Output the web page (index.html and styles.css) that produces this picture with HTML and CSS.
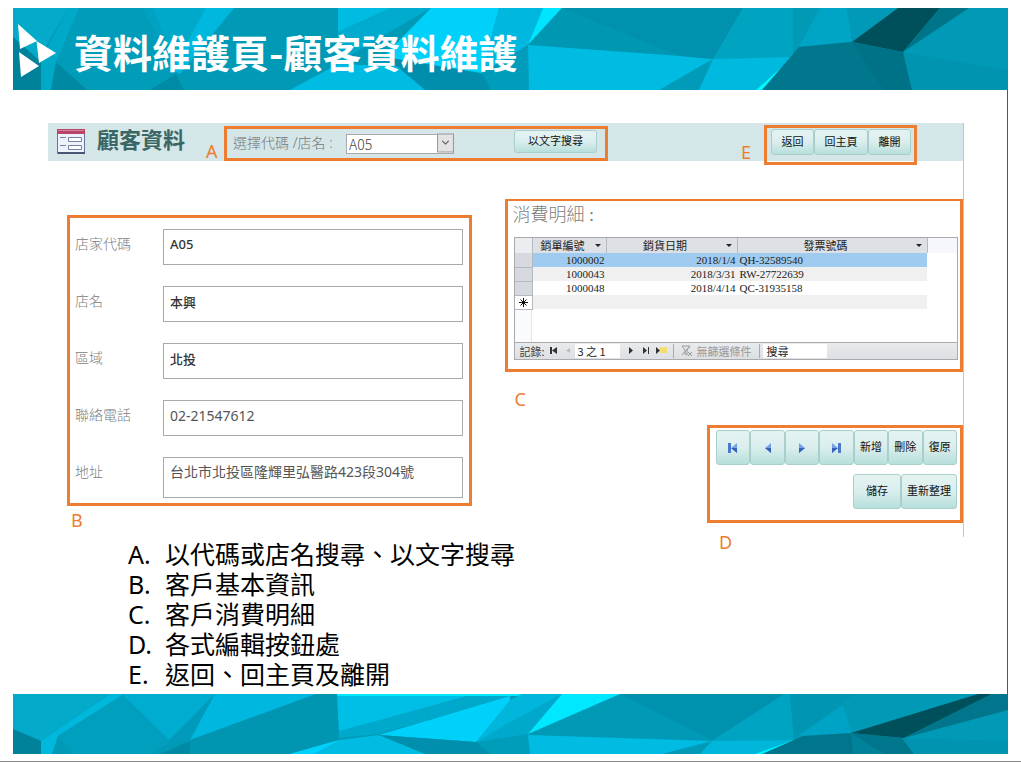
FILE: index.html
```html
<!DOCTYPE html>
<html lang="zh-Hant">
<head>
<meta charset="utf-8">
<meta name="viewport" content="width=device-width, initial-scale=1">
<title>資料維護頁-顧客資料維護</title>
<link rel="stylesheet" href="styles.css">
</head>
<body>
<header class="banner">
  <svg class="facets" viewBox="13 8 995 82" preserveAspectRatio="none" aria-hidden="true">
    <path fill="#009ab6" d="M13 8h995v82H13z"/>
    <path fill="#03aaca" d="M13 8h55L37 62 13 37z"/>
    <path fill="#00829a" d="M13 37l28 25v28H13z"/>
    <path fill="#01a9c9" d="M68 8h11L56 62 51 90H41V60z"/>
    <path fill="#00a3c1" d="M56 63L79 8h74l20 62-8 20H51z" opacity=".3"/>
    <path fill="#0089a2" d="M56 62l31 28H51z"/>
    <path fill="#00a8c9" d="M153 8h66l-43 62z"/>
    <path fill="#00a8c9" d="M153 8h-11l34 62z" opacity=".5"/>
    <path fill="#00b7de" d="M206 8h28l-54 66-8-4z"/>
    <path fill="#008ba4" d="M150 90l26-16 8 16z"/>
    <path fill="#00bbe2" d="M338 8h53l-53 24z"/>
    <path fill="#00abcf" d="M391 8h40L338 62V32z"/>
    <path fill="#00bbe2" d="M338 64l76 3 22 23H290z"/>
    <path fill="#00d1fa" d="M431 8h68l-17 65-99-16z"/>
    <path fill="#00b8df" d="M499 8h44l-15 37-46 28z"/>
    <path fill="#008eac" d="M386 57l96 17 9 16h-66z"/>
    <path fill="#009cbb" d="M482 73l46-28 1 45h-38z"/>
    <path fill="#00e5ff" d="M543 8h19l-34 37z"/>
    <path fill="#0097b3" d="M562 8h118v48l-152-11z"/>
    <path fill="#0091ad" d="M562 8h118v48z"/>
    <path fill="#00bbe2" d="M528 45l152 11 33 3-53 31H529z"/>
    <path fill="#009bb8" d="M659 90l54-31-14 31z"/>
    <path fill="#0091ae" d="M680 8h63l-30 51-33-3z"/>
    <path fill="#00a4c1" d="M743 8h50v49l-80 2z"/>
    <path fill="#00b9de" d="M713 59l80-2-37 33h-57z"/>
    <path fill="#00f8ff" d="M756 90l37-33-31 33z"/>
    <path fill="#00a5c6" d="M820 8h27l5 33-53 6z"/>
    <path fill="#00778d" d="M799 47l53-5 35 48H762z"/>
    <path fill="#0099b7" d="M847 8h51l-46 33z"/>
    <path fill="#00505b" d="M898 8h42l-37 44-51-10z"/>
    <path fill="#00758a" d="M940 8h29l-66 44z"/>
    <path fill="#0094b0" d="M903 52l105 18v20h-95z"/>
    <path fill="#007287" d="M852 42l51 10 9 38h-28z"/>
  </svg>
  <svg class="logo" viewBox="0 0 38 54" aria-hidden="true">
    <path fill="#fff" d="M0 0l19 17L2 25zM18.500 17L38 29 21 39zM1 28l20 14L3 53z"/>
  </svg>
  <h1 class="banner-title">資料維護頁-顧客資料維護</h1>
</header>

<main class="slide">
  <section class="panel">
    <div class="toolbar">
      <svg class="form-icon" viewBox="0 0 28 25" aria-hidden="true">
        <path fill="#eef2fb" stroke="#68759b" d="M.5.5h27v24H.5z"/>
        <path fill="#b8456a" d="M0 0h28v5H0z"/>
        <path stroke="#d5809b" d="M1 1.500h26"/>
        <path stroke="#7480aa" d="M3 8.500h6M3 16.500h6"/>
        <path fill="#fff" stroke="#7480aa" d="M11.500 8.500h13v4h-13zM11.500 16.500h13v4h-13z"/>
        <path stroke="#4b5573" stroke-width="2" d="M1 24h27"/>
      </svg>
      <h2 class="panel-title">顧客資料</h2>
      <div class="callout search-box">
        <span class="mark mark-a">A</span>
        <label class="search-label" for="shop">選擇代碼 /店名 :</label>
        <span class="combo">
          <select id="shop"><option>A05</option></select>
          <svg class="combo-arrow" viewBox="0 0 16 18" aria-hidden="true"><path fill="#e3e3e3" stroke="#9a9a9a" d="M.5.5h15v17H.5z"/><path fill="none" stroke="#555" d="M5 7l3 3 3-3"/></svg>
        </span>
        <button class="btn btn-search" type="button">以文字搜尋</button>
      </div>
      <div class="callout exit-box">
        <span class="mark mark-e">E</span>
        <button class="btn" type="button">返回</button><button class="btn" type="button">回主頁</button><button class="btn" type="button">離開</button>
      </div>
    </div>

    <div class="content">
      <form class="callout details">
        <div class="field"><label for="code">店家代碼</label><input id="code" class="strong" value="A05"></div>
        <div class="field"><label for="name">店名</label><input id="name" class="strong" value="本興"></div>
        <div class="field"><label for="area">區域</label><input id="area" class="strong" value="北投"></div>
        <div class="field"><label for="phone">聯絡電話</label><input id="phone" value="02-21547612"></div>
        <div class="field"><label for="address">地址</label><textarea id="address" rows="1">台北市北投區隆輝里弘醫路423段304號</textarea></div>
        <span class="mark mark-b">B</span>
      </form>

      <div class="side">
        <section class="callout sales">
          <h3 class="sales-title">消費明細 :</h3>
          <div class="sheet">
            <table class="grid">
              <colgroup><col class="c-pick"><col class="c-no"><col class="c-date"><col class="c-inv"><col class="c-rest"></colgroup>
              <thead>
                <tr><th class="corner"></th><th><span class="head">銷單編號<i class="caret"></i></span></th><th><span class="head">銷貨日期<i class="caret"></i></span></th><th><span class="head">發票號碼<i class="caret"></i></span></th><td class="rest"></td></tr>
              </thead>
              <tbody>
                <tr class="selected"><th></th><td class="num">1000002</td><td class="num">2018/1/4</td><td>QH-32589540</td><td class="rest"></td></tr>
                <tr class="odd"><th></th><td class="num">1000043</td><td class="num">2018/3/31</td><td>RW-27722639</td><td class="rest"></td></tr>
                <tr><th></th><td class="num">1000048</td><td class="num">2018/4/14</td><td>QC-31935158</td><td class="rest"></td></tr>
                <tr class="odd"><th class="new"><svg class="star" viewBox="0 0 9 9" aria-hidden="true"><path stroke="#111" d="M4.500 0v9M0 4.500h9M1.500 1.500l6 6M7.500 1.500l-6 6"/></svg></th><td></td><td></td><td></td><td class="rest"></td></tr>
              </tbody>
            </table>
            <div class="sheet-blank"></div>
            <div class="record-bar">
              <label for="rec">記錄:</label>
              <svg class="rec-icons rec-prev" viewBox="0 0 24 9" aria-hidden="true"><path fill="#333" d="M3 1h2v7H3zM10 1v7L5 4.500z"/><path fill="#bbb" d="M23 2v5l-4-2.500z"/></svg>
              <input id="rec" class="rec-input" value="3 之 1">
              <svg class="rec-icons rec-next" viewBox="0 0 42 9" aria-hidden="true"><path fill="#333" d="M1 1v7l4-3.500zM15 1v7l4-3.500zM20 1h1v7h-1zM28 1v7l4-3.500z"/><path fill="#f3dc72" d="M32 1h7v6h-7z"/></svg>
              <span class="filter"><svg class="funnel" viewBox="0 0 12 12" aria-hidden="true"><path fill="none" stroke="#999" d="M1 1h8L6 5v5L4 9V5zM7 7l4 4M11 7l-4 4M1 10L9 1"/></svg>無篩選條件</span>
              <input class="find-input" aria-label="搜尋" value="搜尋">
            </div>
          </div>
          <span class="mark mark-c">C</span>
        </section>

        <div class="callout actions">
          <div class="action-row">
            <button class="btn key" type="button" aria-label="第一筆"><svg class="arrow" viewBox="0 0 12 12"><path fill="#4a78cc" d="M1 1h3v10H1z"/><path fill="#78a0e8" d="M10 1v10L4 6z"/><path fill="#3561ba" d="M10 6v5L4 6z"/></svg></button><button class="btn key" type="button" aria-label="上一筆"><svg class="arrow" viewBox="0 0 12 12"><path fill="#78a0e8" d="M9 1v10L3 6z"/><path fill="#3561ba" d="M9 6v5L3 6z"/></svg></button><button class="btn key" type="button" aria-label="下一筆"><svg class="arrow" viewBox="0 0 12 12"><path fill="#78a0e8" d="M3 1v10l6-5z"/><path fill="#3561ba" d="M3 6v5l6-5z"/></svg></button><button class="btn key" type="button" aria-label="最後一筆"><svg class="arrow" viewBox="0 0 12 12"><path fill="#4a78cc" d="M8 1h3v10H8z"/><path fill="#78a0e8" d="M2 1v10l6-5z"/><path fill="#3561ba" d="M2 6v5l6-5z"/></svg></button><button class="btn key" type="button">新增</button><button class="btn key" type="button">刪除</button><button class="btn key" type="button">復原</button>
          </div>
          <div class="action-row action-row-end">
            <button class="btn key key-save" type="button">儲存</button><button class="btn key key-wide" type="button">重新整理</button>
          </div>
          <span class="mark mark-d">D</span>
        </div>
      </div>
    </div>
  </section>

  <ol class="legend">
    <li>以代碼或店名搜尋、以文字搜尋</li>
    <li>客戶基本資訊</li>
    <li>客戶消費明細</li>
    <li>各式編輯按鈕處</li>
    <li>返回、回主頁及離開</li>
  </ol>
</main>

<footer class="footer-band">
  <svg class="facets" viewBox="13 694 995 60" preserveAspectRatio="none" aria-hidden="true">
    <path fill="#009ab6" d="M13 694h995v60H13z"/>
    <path fill="#03aaca" d="M13 694h97l-69 47-28-12z"/>
    <path fill="#00829a" d="M13 729l28 12v13H13z"/>
    <path fill="#00b8dc" d="M110 694h14l-66 42-6 18H41v-13z"/>
    <path fill="#009fbd" d="M124 694l-66 42 16 18h78l18-13z"/>
    <path fill="#00acd0" d="M122 694h93l-46 46z"/>
    <path fill="#009bba" d="M215 694l-25 46-21 1z"/>
    <path fill="#00b8df" d="M215 694h101l-126 46z"/>
    <path fill="#0089a2" d="M160 754l30-13v13z"/>
    <path fill="#0096b2" d="M316 694h21l2 46-49 14H190v-14z"/>
    <path fill="#00bfe6" d="M337 694h137l-135 38z"/>
    <path fill="#00e8fb" d="M337 694h205v2H337z"/>
    <path fill="#00a8cb" d="M468 696h44l-133 38-40 4v-7z"/>
    <path fill="#00bbe2" d="M339 740l40-5 47 19H290z"/>
    <path fill="#00d1fa" d="M379 735l131-39v6l-34 40zM290 754l49-14-25 14z"/>
    <path fill="#00b6db" d="M510 700l12-6h40l-34 40-52 8z"/>
    <path fill="#00a9cc" d="M510 722l52-28-34 40-52 8z"/>
    <path fill="#0090ad" d="M379 735l97 7 15 12h-66z"/>
    <path fill="#009dbb" d="M476 742l52-8 2 20h-39z"/>
    <path fill="#00e8ff" d="M562 694h58l-92 40z"/>
    <path fill="#0091af" d="M620 694h166l-74 46z"/>
    <path fill="#00bbe2" d="M528 735l184 6-50 13H530z"/>
    <path fill="#00a4c3" d="M784 694h6l4 46-82 1z"/>
    <path fill="#0095b2" d="M790 694h65l-61 45z"/>
    <path fill="#00b7db" d="M712 741l82-1-36 14h-58z"/>
    <path fill="#00f1fb" d="M755 754l39-14-30 14z"/>
    <path fill="#00a3c5" d="M843 705l8 28-53 3z"/>
    <path fill="#00768c" d="M794 740l9-4 48-3 51 5 12 16H762z"/>
    <path fill="#00839a" d="M851 733l33 21h-31z"/>
    <path fill="#00505b" d="M978 694h14l-88 44-53-5z"/>
    <path fill="#00758c" d="M992 694h16v16l-104 28z"/>
    <path fill="#0094b0" d="M903 738l105 3v13h-94z"/>
  </svg>
</footer>
</body>
</html>
```
FILE: styles.css
```css
*, *::before, *::after { box-sizing: border-box; }

body {
  margin: 0;
  min-height: 100vh;
  display: flex;
  flex-direction: column;
  padding: 8px 13px 7px;
  border-bottom: 1px solid #888;
  background: #fff;
  color: #000;
  font-family: "Noto Sans", "Noto Sans CJK TC", sans-serif;
}

h1, h2, h3 { margin: 0; }
button, input, select, textarea { font: inherit; color: inherit; margin: 0; }

/* Banner and footer artwork */
.banner {
  position: relative;
  display: flex;
  align-items: center;
  gap: 18px;
  height: 82px;
  padding: 4px 5px 0;
  overflow: hidden;
}
.facets { position: absolute; inset: 0; width: 100%; height: 100%; }
.logo { position: relative; width: 38px; height: 54px; }
.banner-title {
  position: relative;
  color: #fff;
  font: bold 39px/56px "Noto Sans CJK TC", sans-serif;
  white-space: nowrap;
}
.footer-band { position: relative; height: 60px; }

/* Slide body */
.slide {
  flex: 1;
  padding: 33px 43px 5px 35px;
  border-right: 1px solid #555;
}
.panel { border-right: 1px solid #c4c4c4; }

.callout { position: relative; border: 3px solid #ed7d31; }
.mark {
  position: absolute;
  color: #ed7d31;
  font-size: 18px;
  line-height: 20px;
}
.mark-a { left: -21px; bottom: -3px; }
.mark-b { left: 1px; top: 100%; margin-top: 7px; }
.mark-c { left: 6px; top: 100%; margin-top: 20px; }
.mark-d { left: 9px; top: 100%; margin-top: 12px; }
.mark-e { left: -26px; bottom: 0; }

.btn {
  padding: 0;
  border: 1px solid #a9cfcc;
  border-radius: 3px;
  background: linear-gradient(#e4f3f2, #daeeed 50%, #b7dfdc);
  color: #111;
  font-size: 11px;
  line-height: 16px;
  text-align: center;
}

/* Toolbar */
.toolbar {
  display: flex;
  align-items: flex-start;
  height: 38px;
  padding: 2px 46px 0 9px;
  background: #d4e6e7;
}
.form-icon { width: 28px; height: 25px; margin-top: 4px; }
.panel-title {
  margin-left: 12px;
  width: 127px;
  color: #3a6765;
  font-size: 22px;
  font-weight: 700;
  line-height: 28px;
}
.search-box {
  display: flex;
  align-items: center;
  width: 384px;
  height: 35px;
  margin-top: 1px;
  padding: 0 8px 2px 6px;
}
.search-label { width: 113px; color: #777; font-size: 14px; line-height: 20px; white-space: nowrap; font-weight: 300; }
.combo { position: relative; width: 108px; height: 20px; }
.combo select {
  width: 100%;
  height: 20px;
  padding: 0 2px;
  border: 1px solid #aaa;
  border-radius: 0;
  appearance: none;
  background: #fff;
  color: #444;
  font: 14px/18px "Noto Sans CJK TC", sans-serif;
  font-weight: 300;
}
.combo-arrow { position: absolute; right: 0; top: 0; width: 17px; height: 20px; pointer-events: none; }
.btn-search { width: 83px; height: 23px; margin-left: auto; margin-bottom: 3px; }
.exit-box {
  display: flex;
  width: 153px;
  height: 40px;
  margin-left: auto;
  padding: 1px 3px 0 4px;
}
.exit-box .btn { flex: 1 1 auto; height: 26px; }

/* Two-column content */
.content {
  display: grid;
  grid-template-columns: 405fr 457fr;
  gap: 33px;
  align-items: start;
  padding: 38px 0 14px 19px;
}
.details {
  display: flex;
  flex-direction: column;
  gap: 21px;
  margin-top: 16px;
  padding: 11px 6px 5px 5px;
}
.field { display: flex; align-items: flex-start; }
.field label { width: 88px; color: #808080; font-size: 14px; line-height: 30px; font-weight: 300; }
.field input, .field textarea {
  flex: 1;
  min-width: 0;
  height: 36px;
  padding: 0 6px 6px;
  border: 1px solid #aaa;
  border-radius: 0;
  background: #fff;
  color: #555;
  font-size: 14px;
  line-height: 28px;
  resize: none;
  overflow: hidden;
}
.field textarea { height: 41px; }
.field .strong { color: #333; font-size: 13px; font-weight: 500; }

.side { display: flex; flex-direction: column; align-items: flex-end; gap: 53px; }

/* Sales subform */
.sales { width: 100%; padding: 0 2px 9px 6px; border-top-width: 2px; }
.sales-title {
  color: #808080;
  font: 18px/28px "Liberation Serif", "Noto Sans CJK TC", serif;
  font-weight: 300;
  margin-left: -2px;
  padding-bottom: 8px;
}
.sheet { border: 1px solid #aaa; background: #fff; }
.grid {
  width: 100%;
  border-collapse: collapse;
  table-layout: fixed;
  font: 11px/14px "Liberation Serif", "Noto Sans CJK TC", serif;
  color: #222;
}
.c-pick { width: 17px; }
.c-no { width: 74px; }
.c-date { width: 131px; }
.c-inv { width: 190px; }
.grid th, .grid td { height: 14px; padding: 0 2px; white-space: nowrap; }
.grid thead th { height: 15px; }
.grid th { border-right: 1px solid #b5b9c0; background: #dde0e5; font-weight: 400; }
.grid tbody th { padding: 0; border-bottom: 1px solid #b5b9c0; background: #d6dae0; }
.grid thead .corner { background: #ebedf1; }
.grid .num { text-align: right; }
.grid .odd td { background: #f0f0f0; }
.grid .selected td { background: #9fcbf0; }
.grid tr .rest { background: #fff; }
.grid thead .rest { background: #f5f7fc; }
.grid tbody .new { background: #fff; line-height: 0; }
.star { width: 9px; height: 9px; }
.head { display: flex; align-items: center; justify-content: center; position: relative; padding-right: 14px; line-height: 14px; }
.caret {
  position: absolute;
  right: 3px;
  border: 3px solid transparent;
  border-top-color: #222;
  border-bottom: 0;
}
.sheet-blank { height: 32px; width: 17px; border-right: 1px solid #e3e6ee; background: #fafbfe; }
.record-bar {
  display: flex;
  align-items: center;
  height: 17px;
  padding-left: 4px;
  border-top: 1px solid #aaa;
  background: linear-gradient(#e9ebee, #dcdfe3);
  color: #444;
  font: 11px/14px "Noto Sans CJK TC", sans-serif;
  white-space: nowrap;
}
.record-bar label { width: 28px; }
.rec-icons { height: 9px; flex: none; }
.rec-prev { width: 24px; margin: 0 4px 0 0; }
.rec-next { width: 42px; margin: 0 3px 0 8px; }
.record-bar input { height: 14px; padding: 0 3px; border: 0; background: #fff; color: #222; }
.record-bar .rec-input { width: 45px; padding: 0 2px; }
.filter {
  display: flex;
  align-items: center;
  gap: 3px;
  width: 87px;
  padding-left: 7px;
  border-left: 1px solid #aaa;
  border-right: 1px solid #aaa;
  color: #999;
}
.funnel { width: 12px; height: 12px; flex: none; }
.find-input { width: 64px; margin-left: 3px; }

/* Record buttons */
.actions {
  display: flex;
  flex-direction: column;
  width: 256px;
  gap: 9px;
  padding: 2px 3px 11px 6px;
}
.action-row { display: flex; }
.action-row-end { justify-content: flex-end; }
.key { flex: 1; height: 35px; }
.key-save { flex: 0 0 48px; }
.key-wide { flex: 0 0 56px; }
.arrow { width: 12px; height: 12px; vertical-align: middle; }

/* Legend */
.legend {
  list-style: none;
  counter-reset: item;
  margin: 2px 0 0 80px;
  padding: 0;
  font: 25px/30px "Noto Sans", "Noto Sans CJK JP", sans-serif;
}
.legend li { counter-increment: item; display: flex; }
.legend li::before { content: counter(item, upper-alpha) "."; width: 37px; }
```
